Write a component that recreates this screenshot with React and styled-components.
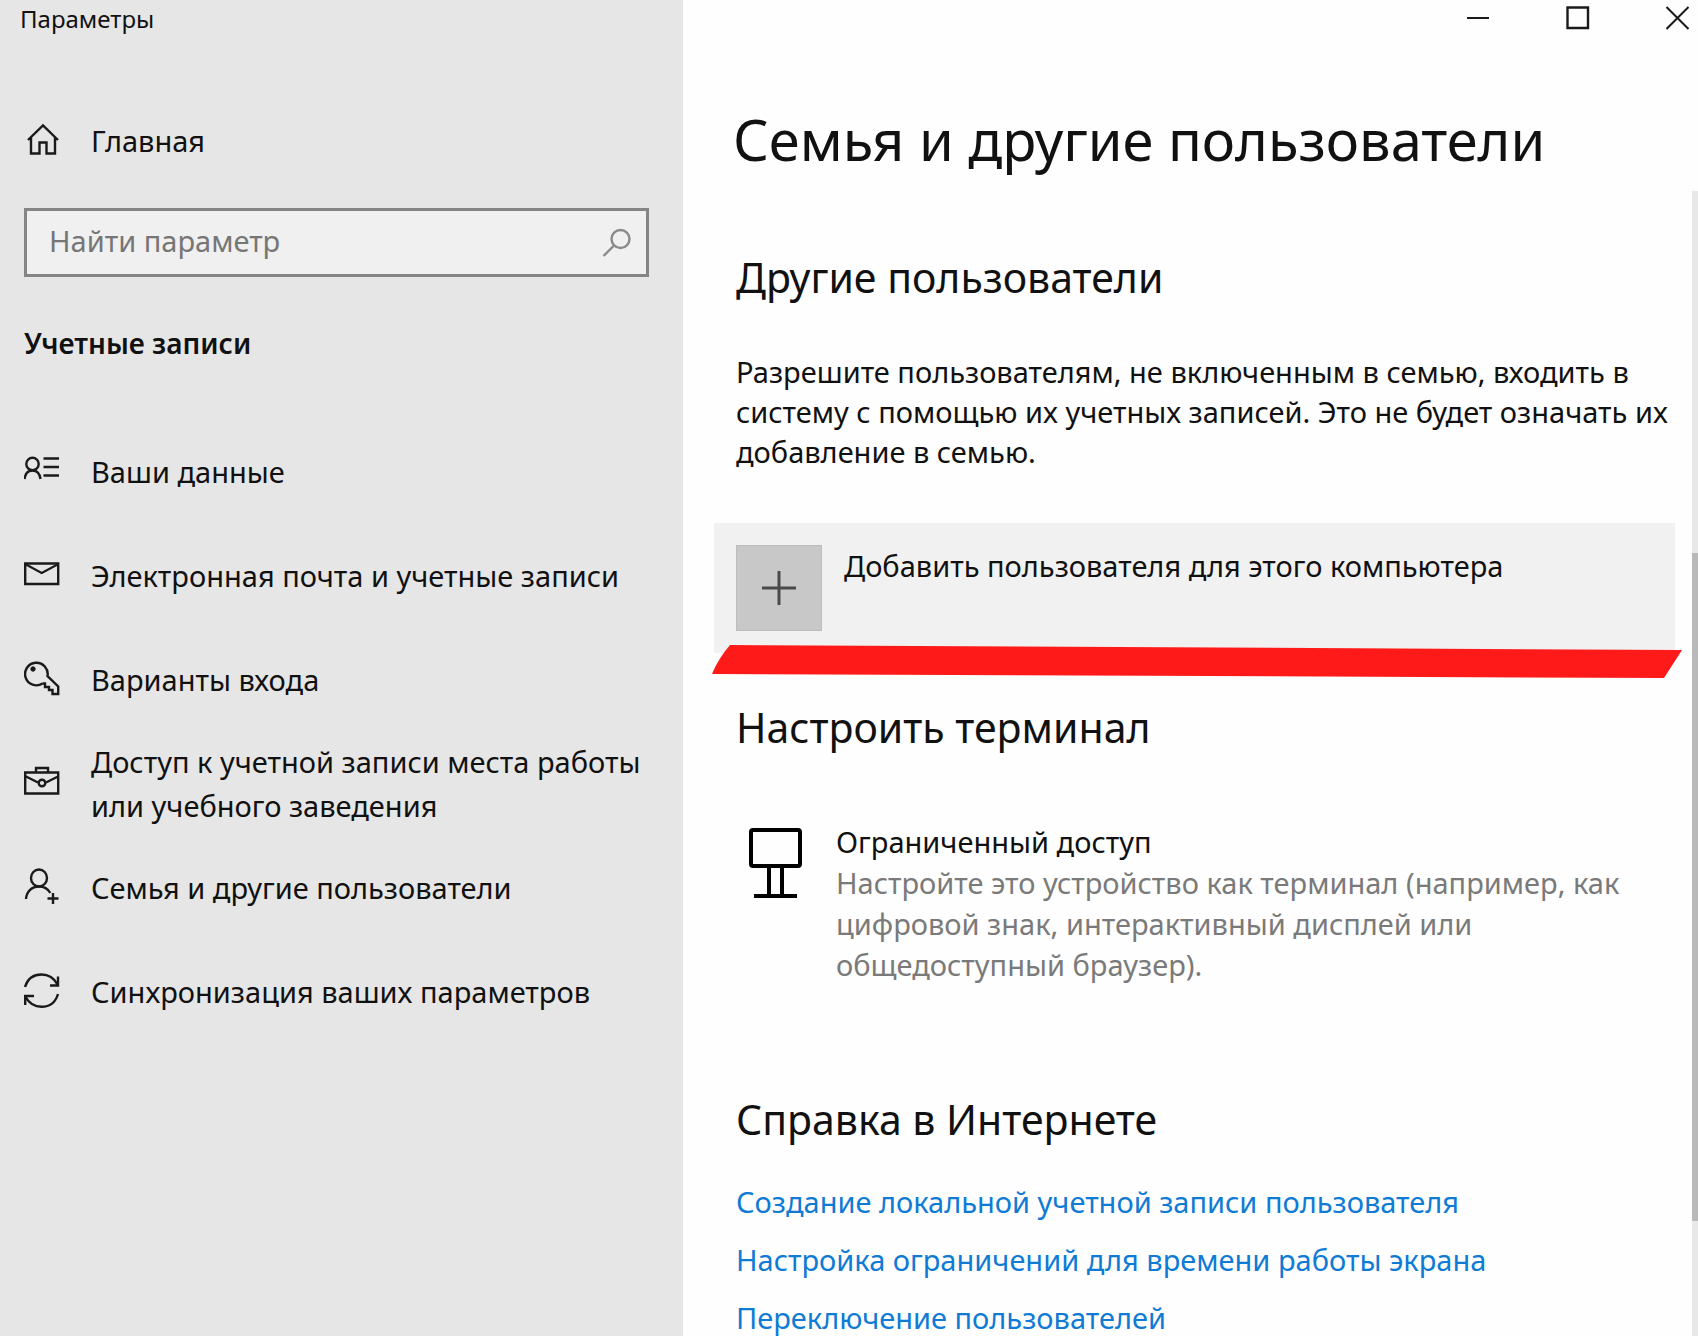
import React from "react";
import styled, { createGlobalStyle } from "styled-components";

const GlobalStyle = createGlobalStyle`
  *, *::before, *::after { box-sizing: border-box; }
  body {
    margin: 0;
    color: #111;
    background: #fefefe;
    font-family: "Noto Sans", "Open Sans", sans-serif;
    font-size: 29px;
    line-height: 40px;
  }
  h1, h2, p, ul { margin: 0; padding: 0; font-weight: 400; }
  ul { list-style: none; }
  button, input { font: inherit; color: inherit; }
  a { text-decoration: none; }
`;

const Window = styled.div`
  display: grid;
  grid-template-columns: 683px minmax(0, 1fr);
  height: 100vh;
  overflow: hidden;
`;

const Sidebar = styled.aside`
  padding: 0 34px 0 24px;
  background: #e6e6e6;
`;

const WindowTitle = styled.div`
  margin-left: -4px;
  font-size: 24px;
  line-height: 38px;
`;

const NavLink = styled.a`
  display: flex;
  align-items: center;
  gap: 31px;
  min-height: ${(p) => p.$height}px;
  color: #111;
  line-height: 44px;

  svg { flex: none; margin-bottom: 4px; }
`;

const HomeRow = styled.div`
  margin-top: 81px;
`;

const SearchBox = styled.label`
  display: flex;
  align-items: center;
  height: 69px;
  margin-top: 45px;
  padding: 0 14px 0 22px;
  border: 3px solid #858585;
  background: #f0f0f0;
`;

const SearchInput = styled.input`
  flex: 1;
  min-width: 0;
  padding: 0 0 4px;
  border: 0;
  outline: 0;
  background: transparent;

  &::placeholder { color: #767676; opacity: 1; }
`;

const SidebarHeading = styled.h2`
  margin-top: 46px;
  font-size: 28px;
  && { font-weight: 600; }
`;

const NavList = styled.ul`
  && { margin-top: 57px; }
`;

const Main = styled.main`
  display: flex;
  flex-direction: column;
  min-width: 0;
  min-height: 0;
`;

const CaptionBar = styled.div`
  display: flex;
  justify-content: flex-end;
  height: 36px;
`;

const CaptionButton = styled.button`
  display: flex;
  align-items: center;
  justify-content: flex-end;
  width: 100px;
  padding: 0 8px 0 0;
  border: 0;
  background: transparent;
`;

const PageTitle = styled.h1`
  height: 155px;
  padding: 63px 50px 0;
  font-size: 56px;
  line-height: 80px;
  white-space: nowrap;
`;

const ScrollArea = styled.div`
  display: flex;
  flex: 1;
  min-height: 0;
`;

const Content = styled.div`
  flex: 1;
  min-width: 0;
  padding: 58px 17px 0 31px;
`;

const Section = styled.section`
  margin-top: ${(p) => p.$gap || 0}px;
  padding-left: 22px;
`;

const SectionTitle = styled.h2`
  font-size: 41px;
  line-height: 56px;
`;

const Description = styled.p`
  && { margin-top: 47px; }
  color: #111;
`;

const Line = styled.span`
  display: block;
  white-space: nowrap;
`;

const AddPanel = styled.div`
  position: relative;
  height: 130px;
  margin-top: 51px;
`;

const AddButton = styled.button`
  display: flex;
  align-items: flex-start;
  gap: 22px;
  width: 100%;
  height: 100%;
  padding: 22px;
  border: 0;
  background: #f1f1f1;
  line-height: 42px;
  text-align: left;
`;

const PlusTile = styled.span`
  display: grid;
  flex: none;
  place-items: center;
  width: 86px;
  height: 86px;
  border: 1px solid #bdbdbd;
  background: #c8c8c8;
`;

const Marker = styled.svg`
  position: absolute;
  top: 122px;
  left: -2px;
  width: calc(100% + 9px);
  height: 33px;
  pointer-events: none;
`;

const Kiosk = styled.a`
  display: flex;
  align-items: flex-start;
  gap: 34px;
  margin-top: 66px;
  padding-left: 12px;
  color: #111;

  svg { flex: none; margin-top: 6px; }
`;

const KioskText = styled.span`
  line-height: 41px;
`;

const Muted = styled.span`
  color: #7a7a7a;
`;

const LinkList = styled.ul`
  && { margin-top: 26px; }
`;

const HelpLink = styled.a`
  color: #0f7bd4;
  line-height: 58px;
  white-space: nowrap;
`;

const Track = styled.div`
  width: 6px;
  padding-top: 362px;
  background: #e8e8e8;
`;

const Thumb = styled.div`
  height: 668px;
  background: #b9b9b9;
`;

function Icon({ width = 36, height = 36, stroke = 2.4, color = "#1a1a1a", children }) {
  return (
    <svg width={width} height={height} viewBox={`0 0 ${width} ${height}`} fill="none"
      stroke={color} strokeWidth={stroke} aria-hidden="true">
      {children}
    </svg>
  );
}

const HomeIcon = () => (
  <Icon>
    <path d="M4 19 19 4.500 34 19M7 16.500V32.500h8.500V21.500h7V32.500H31V16.500" />
  </Icon>
);

const items = [
  {
    label: ["Ваши данные"],
    icon: (
      <>
        <circle cx="8.500" cy="12" r="6.200" />
        <path d="M.5 27c.8-5.500 4-8.500 8-8.500s7.200 3 8 8.500M19.500 6.500h15.500M19.500 15h15.500M19.500 23.500h15.500" />
      </>
    ),
  },
  {
    label: ["Электронная почта и учетные записи"],
    icon: <><path d="M1.200 7.500h33v20.500h-33z" /><path d="M2 8.500 17.700 17 33.500 8.500" strokeWidth="2" /></>,
  },
  {
    label: ["Варианты входа"],
    icon: (
      <>
        <path d="M18.500 23.500A11.300 11.300 0 1 1 23.500 16L34.200 26.500V34H28.500V30H25V27H21V23.500L18.500 23.500" />
        <circle cx="9" cy="9" r="2.200" fill="#1a1a1a" strokeWidth="1" />
      </>
    ),
  },
  {
    label: ["Доступ к учетной записи места работы", "или учебного заведения"],
    icon: (
      <>
        <path d="M1.200 8.500h33v21h-33zM12 8V4h12v4M2 12.500l12 6M34 12.500l-12 6" />
        <circle cx="18" cy="19" r="3.300" />
      </>
    ),
  },
  {
    label: ["Семья и другие пользователи"],
    icon: (
      <>
        <ellipse cx="15" cy="10" rx="8" ry="8.500" />
        <path d="M2 31c.5-7.500 6-12.500 13-12.500 5 0 9 2.500 11.300 6.500M29 25v11M23.500 30.500h11" />
      </>
    ),
  },
  {
    label: ["Синхронизация ваших параметров"],
    icon: (
      <>
        <path d="M1 15C3.500 7 9.500 2.500 17.500 2.500c7 0 12.500 3.500 16 10M34 4.500V13.500H26M34 22C31.500 30.500 25.500 34.800 17.500 34.800c-7 0-12.500-3.500-16-10M1.200 33V24H10" />
      </>
    ),
  },
];

const helpLinks = [
  "Создание локальной учетной записи пользователя",
  "Настройка ограничений для времени работы экрана",
  "Переключение пользователей",
];

export default function App() {
  return (
    <>
      <GlobalStyle />
      <Window>
        <Sidebar>
          <WindowTitle>Параметры</WindowTitle>
          <HomeRow>
            <NavLink href="#home" $height={44}>
              <HomeIcon />
              Главная
            </NavLink>
          </HomeRow>
          <SearchBox>
            <SearchInput type="text" placeholder="Найти параметр" aria-label="Найти параметр" />
            <Icon width={30} height={30} color="#8a8a8a">
              <circle cx="18.500" cy="11" r="9" />
              <path d="M12 17.500 1.500 28" />
            </Icon>
          </SearchBox>
          <SidebarHeading>Учетные записи</SidebarHeading>
          <nav>
            <NavList>
              {items.map((item, i) => (
                <li key={item.label[0]}>
                  <NavLink href={`#section-${i + 1}`} $height={104}>
                    <Icon>{item.icon}</Icon>
                    <span>
                      {item.label.map((line) => <Line key={line}>{line}</Line>)}
                    </span>
                  </NavLink>
                </li>
              ))}
            </NavList>
          </nav>
        </Sidebar>

        <Main>
          <CaptionBar>
            <CaptionButton type="button" aria-label="Свернуть">
              <Icon width={24} height={24} stroke={2}><path d="M1 12h22" /></Icon>
            </CaptionButton>
            <CaptionButton type="button" aria-label="Развернуть">
              <Icon width={24} height={24} stroke={2.4}><path d="M1.500 1.500h20.500v20.500H1.500z" /></Icon>
            </CaptionButton>
            <CaptionButton type="button" aria-label="Закрыть">
              <Icon width={24} height={24} stroke={2}><path d="m.5 1 22 22M22.500 1 .5 23" /></Icon>
            </CaptionButton>
          </CaptionBar>
          <PageTitle>Семья и другие пользователи</PageTitle>
          <ScrollArea>
            <Content>
              <Section>
                <SectionTitle>Другие пользователи</SectionTitle>
                <Description>
                  <Line>Разрешите пользователям, не включенным в семью, входить в</Line>
                  <Line>систему с помощью их учетных записей. Это не будет означать их</Line>
                  <Line>добавление в семью.</Line>
                </Description>
              </Section>
              <AddPanel>
                <AddButton type="button">
                  <PlusTile>
                    <Icon stroke={3} color="#4a4a4a"><path d="M18 1v34M1 18h34" /></Icon>
                  </PlusTile>
                  Добавить пользователя для этого компьютера
                </AddButton>
                <Marker viewBox="0 0 970 33" preserveAspectRatio="none" aria-hidden="true">
                  <path d="M18 0 970 5 952 33 0 29Q6 14 18 0Z" fill="#ff1a1a" />
                </Marker>
              </AddPanel>
              <Section $gap={46}>
                <SectionTitle>Настроить терминал</SectionTitle>
                <Kiosk href="#kiosk">
                  <Icon width={54} height={72} stroke={4} color="#000">
                    <rect x="3" y="3" width="49" height="36" rx="2" />
                    <path d="M21 39v29M34 39v29M6 69h43" />
                  </Icon>
                  <KioskText>
                    <Line>Ограниченный доступ</Line>
                    <Muted>
                      <Line>Настройте это устройство как терминал (например, как</Line>
                      <Line>цифровой знак, интерактивный дисплей или</Line>
                      <Line>общедоступный браузер).</Line>
                    </Muted>
                  </KioskText>
                </Kiosk>
              </Section>
              <Section $gap={106}>
                <SectionTitle>Справка в Интернете</SectionTitle>
                <LinkList>
                  {helpLinks.map((text, i) => (
                    <li key={text}><HelpLink href={`#help-${i + 1}`}>{text}</HelpLink></li>
                  ))}
                </LinkList>
              </Section>
            </Content>
            <Track><Thumb /></Track>
          </ScrollArea>
        </Main>
      </Window>
    </>
  );
}
